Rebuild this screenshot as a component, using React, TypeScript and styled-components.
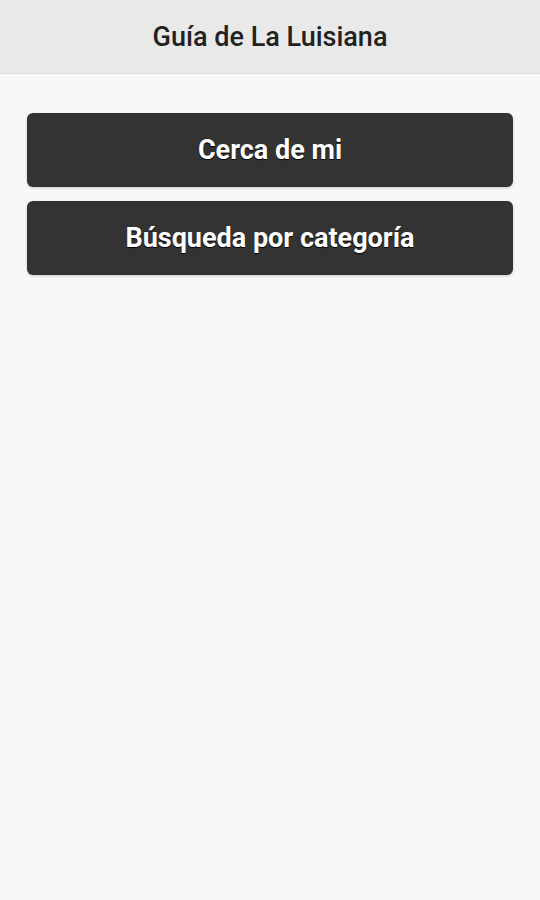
import styled, { createGlobalStyle } from 'styled-components';

const GlobalStyle = createGlobalStyle`
	html, body {
		margin: 0;
		padding: 0;
		background: #f8f8f8;
		font-family: Roboto, "Liberation Sans", sans-serif;
	}
`;

const App = () => {
	return (
		<>
			<GlobalStyle />
			<Page>
				<Header>
					<Title>Guía de La Luisiana</Title>
				</Header>
				<Content>
					<MenuButton>Cerca de mi</MenuButton>
					<MenuButton>Búsqueda por categoría</MenuButton>
				</Content>
			</Page>
		</>
	);
};

const Page = styled.div`
	display: flex;
	flex-direction: column;
	min-height: 900px;
	background: #f8f8f8;
`;

const Header = styled.header`
	display: flex;
	align-items: center;
	justify-content: center;

	height: 74px;
	box-sizing: border-box;

	background: #e9e9e9;
	border-bottom: 1px solid #dedede;
`;

const Title = styled.h1`
	margin: 0;
	padding: 0;

	font-size: 27px;
	font-weight: 500;
	color: #222;
`;

const Content = styled.main`
	display: flex;
	flex-direction: column;
	gap: 14px;

	padding: 39px 27px;
`;

const MenuButton = styled.button`
	width: 100%;
	height: 74px;

	border: none;
	border-radius: 6px;
	background: #333;

	box-shadow: rgba(0, 0, 0, 0.2) 0px 1px 3px;

	font-family: Roboto, "Liberation Sans", sans-serif;
	font-size: 27px;
	font-weight: 700;
	color: #fff;
	text-shadow: 0 1px 1px #000;

	cursor: pointer;
`;

export default App;
